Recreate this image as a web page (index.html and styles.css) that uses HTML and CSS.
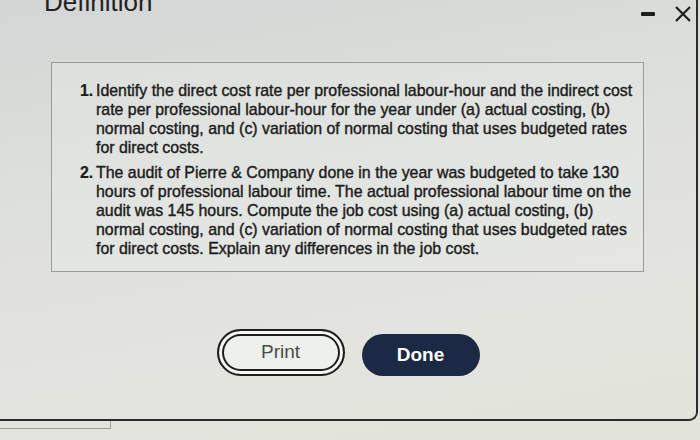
FILE: index.html
```html
<!DOCTYPE html>
<html lang="en">
<head>
<meta charset="utf-8">
<title>Definition</title>
<link rel="stylesheet" href="styles.css">
</head>
<body>
<div class="dialog">
  <div class="header">
    <h1 class="title">Definition</h1>
    <div class="controls">
      <span class="minimize" aria-label="Minimize"></span>
      <svg class="close" width="18" height="18" viewBox="0 0 18 18" aria-label="Close">
        <path d="M2 2 L16 16 M16 2 L2 16" stroke="#1e1e1e" stroke-width="2.2" fill="none"/>
      </svg>
    </div>
  </div>
  <div class="content-box">
    <ol class="questions">
      <li class="q"><span class="num">1.</span><span class="txt">Identify the direct cost rate per professional labour-hour and the indirect cost rate per professional labour-hour for the year under (a) actual costing, (b) normal costing, and (c) variation of normal costing that uses budgeted rates for direct costs.</span></li>
      <li class="q"><span class="num">2.</span><span class="txt">The audit of Pierre &amp; Company done in the year was budgeted to take 130 hours of professional labour time. The actual professional labour time on the audit was 145 hours. Compute the job cost using (a) actual costing, (b) normal costing, and (c) variation of normal costing that uses budgeted rates for direct costs. Explain any differences in the job cost.</span></li>
    </ol>
  </div>
  <div class="actions">
    <button class="btn btn-print">Print</button>
    <button class="btn btn-done">Done</button>
  </div>
</div>
<div class="behind"></div>
</body>
</html>
```
FILE: styles.css
```css
html, body {
  margin: 0;
  padding: 0;
}
body {
  width: 700px;
  height: 440px;
  overflow: hidden;
  font-family: "Liberation Sans", Arial, sans-serif;
  color: #1c1c1c;
  background: linear-gradient(170deg, #d3d6d4 0%, #dddfdc 35%, #e3e4df 70%, #e2e3d8 100%);
}
.dialog {
  box-sizing: border-box;
  width: 698px;
  height: 421px;
  border-right: 2px solid #2b2b2d;
  border-bottom: 2px solid #2b2b2d;
  border-bottom-right-radius: 9px;
  display: flex;
  flex-direction: column;
}
.header {
  height: 62px;
  display: flex;
  justify-content: space-between;
  align-items: flex-start;
}
.title {
  margin: -13px 0 0 44px;
  font-size: 26px;
  font-weight: normal;
  line-height: 30px;
  color: #222;
}
.controls {
  display: flex;
  align-items: center;
  gap: 19px;
  margin: 5px 4px 0 0;
}
.minimize {
  display: block;
  width: 14px;
  height: 4px;
  background: #1e1e1e;
  border-radius: 1px;
}
.close {
  display: block;
}
.content-box {
  box-sizing: border-box;
  margin-left: 51px;
  width: 593px;
  height: 210px;
  border: 1px solid #9a9c9a;
  background: rgba(236, 238, 234, 0.3);
  padding: 18px 6px 0 28px;
}
.questions {
  list-style: none;
  margin: 0;
  padding: 0;
}
.q {
  display: flex;
  font-size: 15.9px;
  line-height: 19px;
  margin-bottom: 6px;
}
.num {
  flex: 0 0 16px;
  font-weight: bold;
  -webkit-text-stroke: 0.2px #1c1c1c;
}
.txt {
  flex: 1;
  -webkit-text-stroke: 0.4px #1c1c1c;
}
.actions {
  display: flex;
  justify-content: center;
  align-items: center;
  gap: 17px;
  margin-top: 57px;
}
.btn {
  font-family: "Liberation Sans", Arial, sans-serif;
  font-size: 19px;
  cursor: pointer;
}
.btn-print {
  box-sizing: border-box;
  width: 128px;
  height: 47px;
  border: 2px solid #1e1e1e;
  border-radius: 24px;
  background: #eef0ec;
  box-shadow: inset 0 0 0 3px #f7f7f5, inset 0 0 0 5px #1e1e1e;
  color: #4a4a4a;
  padding-bottom: 3px;
}
.btn-done {
  box-sizing: border-box;
  width: 118px;
  height: 42px;
  border: none;
  border-radius: 21px;
  background: #1c2944;
  color: #fff;
  font-weight: bold;
  margin-top: 4px;
}
.behind {
  width: 110px;
  height: 7px;
  border: 1px solid #9a9c9a;
  border-left: none;
  border-top: none;
}
```
